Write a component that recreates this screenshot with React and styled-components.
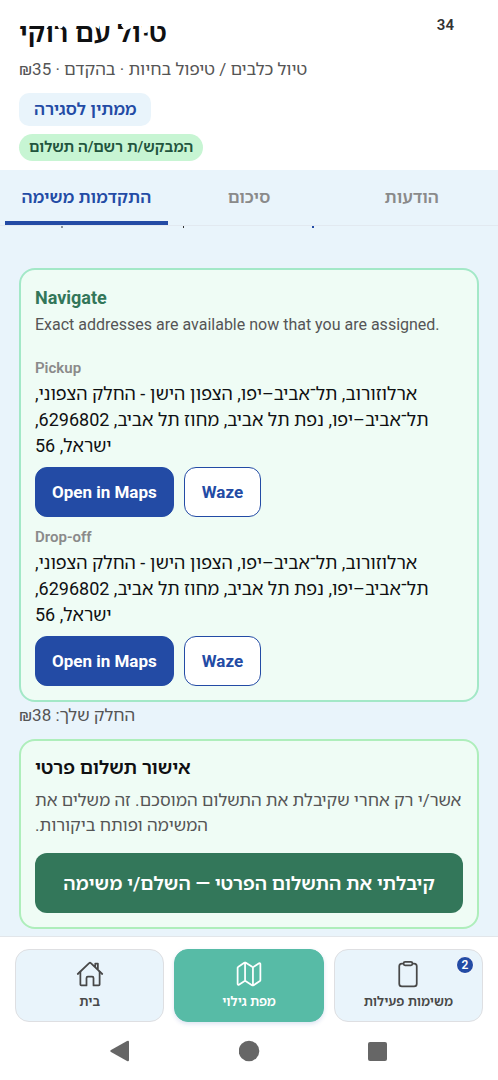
import React from "react";
import styled, { createGlobalStyle, css } from "styled-components";
import { IoHomeOutline, IoMapOutline, IoClipboardOutline } from "react-icons/io5";

const colors = {
  page: "#e9f4fb",
  blue: "#234ba5",
  green: "#33775a",
  teal: "#57bba6",
  mint: "#effcf5",
  text: "#0f1012",
  muted: "#555555",
  faint: "#8a8a8a",
};

const GlobalStyle = createGlobalStyle`
  * {
    box-sizing: border-box;
  }
  body {
    margin: 0;
    background: #fff;
    color: ${colors.text};
    font-family: Roboto, "Noto Sans Hebrew", "Noto Sans", "Open Sans", sans-serif;
  }
  h1, h2, h3, p {
    margin: 0;
  }
  button {
    font-family: inherit;
    cursor: pointer;
  }
`;

const Screen = styled.div`
  min-height: 100vh;
  display: flex;
  flex-direction: column;
`;

const Header = styled.header`
  position: relative;
  display: flex;
  flex-direction: column;
  align-items: flex-start;
  padding: 13px 19px 9px;
  background: #fff;
`;

const Title = styled.h1`
  font-size: 27px;
  line-height: 40px;
  font-weight: 600;
`;

const Subtitle = styled.p`
  margin-top: 3px;
  font-size: 17px;
  line-height: 26px;
  color: ${colors.muted};
`;

const Battery = styled.span`
  position: absolute;
  top: 16px;
  right: 44px;
  font-size: 15px;
  line-height: 18px;
  font-weight: 600;
  color: #333;
`;

const StatusIcons = styled.svg`
  position: absolute;
  top: 14px;
  left: 19px;
`;

const Status = styled.span`
  margin-top: 11px;
  padding: 4px 15px;
  border-radius: 10px;
  background: ${colors.page};
  color: ${colors.blue};
  font-size: 17px;
  line-height: 25px;
  font-weight: 600;
`;

const Payment = styled.span`
  margin-top: 8px;
  padding: 2px 10px;
  border-radius: 14px;
  background: #c7f5d3;
  color: #22543d;
  font-size: 15px;
  line-height: 23px;
  font-weight: 600;
`;

const Tabs = styled.nav`
  display: flex;
  padding: 0 5px;
  background: ${colors.page};
  border-bottom: 1px solid #e2e9f0;
`;

const Tab = styled.button`
  flex: 1;
  height: 55px;
  padding: 2px 0 0;
  border: 0;
  border-bottom: 4px solid ${(props) => (props.$active ? colors.blue : "transparent")};
  background: none;
  color: ${(props) => (props.$active ? colors.blue : colors.faint)};
  font-size: 17px;
  font-weight: 600;
`;

const Content = styled.main`
  flex: 1;
  padding: 0 19px 7px;
  background: ${colors.page};
`;

const ScrolledSteps = styled.svg`
  display: block;
  height: 42px;
`;

const Card = styled.section`
  padding: 14px;
  border: 2px solid ${(props) => (props.$payment ? "#aeeebb" : "#a3e8c7")};
  border-radius: 16px;
  background: ${colors.mint};
`;

const CardTitle = styled.h2`
  font-size: 18px;
  line-height: 27px;
  font-weight: 700;
  color: ${colors.green};
`;

const CardText = styled.p`
  font-size: 16px;
  line-height: 28px;
  color: ${colors.muted};
`;

const Stop = styled.div`
  margin-top: ${(props) => (props.$first ? "17px" : "8px")};
`;

const StopLabel = styled.h3`
  font-size: 15px;
  line-height: 25px;
  font-weight: 600;
  color: ${colors.faint};
`;

const Address = styled.p`
  font-size: 18px;
  line-height: 26px;
  text-align: left;
`;

const Actions = styled.div`
  display: flex;
  gap: 10px;
  margin-top: 8px;
`;

const MapButton = styled.button`
  height: 50px;
  padding: 0 16px;
  border: 1px solid ${colors.blue};
  border-radius: 12px;
  background: ${colors.blue};
  color: #fff;
  font-size: 17px;
  font-weight: 700;
  ${(props) =>
    props.$outline &&
    css`
      padding: 0 17px;
      background: #fff;
      color: ${colors.blue};
    `}
`;

const Share = styled.p`
  padding-bottom: 11px;
  font-size: 17px;
  line-height: 26px;
  color: ${colors.muted};
  text-align: left;
`;

const PaymentTitle = styled.h2`
  font-size: 19px;
  line-height: 26px;
  font-weight: 600;
  text-align: left;
`;

const PaymentText = styled.p`
  margin-top: 7px;
  font-size: 17px;
  line-height: 25px;
  color: ${colors.muted};
  text-align: left;
`;

const ConfirmButton = styled.button`
  width: 100%;
  height: 60px;
  margin-top: 15px;
  border: 0;
  border-radius: 12px;
  background: ${colors.green};
  color: #fff;
  font-size: 19px;
  font-weight: 600;
`;

const BottomNav = styled.nav`
  display: flex;
  gap: 10px;
  padding: 12px 15px;
  border-top: 1px solid #e2e6ea;
  background: #fff;
`;

const NavItem = styled.a`
  position: relative;
  flex: 1;
  height: 73px;
  display: flex;
  flex-direction: column;
  align-items: center;
  gap: 4px;
  padding-top: 10px;
  border: 1px solid #dedfe2;
  border-radius: 14px;
  background: ${colors.page};
  color: #484848;
  font-size: 13px;
  line-height: 20px;
  font-weight: 600;
  text-decoration: none;
  svg {
    width: 28px;
    height: 28px;
  }
  ${(props) =>
    props.$active &&
    css`
      border-color: ${colors.teal};
      background: ${colors.teal};
      color: #fff;
      box-shadow: 0 2px 4px rgba(35, 75, 165, 0.15);
    `}
`;

const Badge = styled.span`
  position: absolute;
  top: 6px;
  right: 8px;
  width: 18px;
  height: 18px;
  border: 1px solid #fff;
  border-radius: 50%;
  background: ${colors.blue};
  color: #fff;
  font-size: 12px;
  line-height: 16px;
  text-align: center;
`;

const SystemBar = styled.div`
  display: flex;
  justify-content: center;
  gap: 108px;
  padding: 6px 0 18px;
  background: #fff;
`;

const SystemButton = styled.button`
  padding: 0;
  border: 0;
  background: none;
  color: #666;
  svg {
    display: block;
  }
`;

const ADDRESS =
  "ארלוזורוב, תל־אביב–יפו, הצפון הישן - החלק הצפוני, תל־אביב–יפו, נפת תל אביב, מחוז תל אביב, 6296802, ישראל, 56";

const stops = ["Pickup", "Drop-off"];

const tabs = ["התקדמות משימה", "סיכום", "הודעות"];

const navItems = [
  { label: "בית", Icon: IoHomeOutline },
  { label: "מפת גילוי", Icon: IoMapOutline, active: true },
  { label: "משימות פעילות", Icon: IoClipboardOutline, badge: 2 },
];

function App() {
  return (
    <Screen>
      <GlobalStyle />
      <Header>
        <Title dir="rtl">טיול עם רוקי</Title>
        {/* white status bar icons, they only show where they cross the title */}
        <StatusIcons width="150" height="24" fill="#fff" aria-hidden="true">
          <rect width="150" height="10" />
          <path d="M25 9h7l-6 8z" />
          <path d="M37 9h9l-3 5-3 1z" />
          <path d="M70 9h10v6z" />
          <path d="M102 11l12-2v4l-8 4z" />
          <circle cx="126" cy="15" r="4" />
          <path d="M143 9h6v6z" />
        </StatusIcons>
        <Battery>34</Battery>
        <Subtitle dir="rtl">טיול כלבים / טיפול בחיות · בהקדם · ₪35</Subtitle>
        <Status dir="rtl">ממתין לסגירה</Status>
        <Payment dir="rtl">המבקש/ת רשם/ה תשלום</Payment>
      </Header>
      <Tabs>
        {tabs.map((tab, index) => (
          <Tab key={tab} dir="rtl" $active={index === 0}>
            {tab}
          </Tab>
        ))}
      </Tabs>
      <Content>
        <ScrolledSteps width="300" height="42" aria-hidden="true">
          <rect x="42" y="0" width="2" height="2" fill="#8a949b" />
          <rect x="164" y="0" width="1" height="2" fill="#333" />
          <rect x="293" y="0" width="2" height="2" fill={colors.blue} />
        </ScrolledSteps>
        <Card>
          <CardTitle>Navigate</CardTitle>
          <CardText>Exact addresses are available now that you are assigned.</CardText>
          {stops.map((stop, index) => (
            <Stop key={stop} $first={index === 0}>
              <StopLabel>{stop}</StopLabel>
              <Address dir="rtl">{ADDRESS}</Address>
              <Actions>
                <MapButton>Open in Maps</MapButton>
                <MapButton $outline>Waze</MapButton>
              </Actions>
            </Stop>
          ))}
        </Card>
        <Share dir="rtl">החלק שלך: ₪38</Share>
        <Card $payment>
          <PaymentTitle dir="rtl">אישור תשלום פרטי</PaymentTitle>
          <PaymentText dir="rtl">
            אשר/י רק אחרי שקיבלת את התשלום המוסכם. זה משלים את המשימה ופותח ביקורות.
          </PaymentText>
          <ConfirmButton dir="rtl">קיבלתי את התשלום הפרטי — השלם/י משימה</ConfirmButton>
        </Card>
      </Content>
      <BottomNav>
        {navItems.map(({ label, Icon, active, badge }) => (
          <NavItem key={label} href="#" $active={active}>
            <Icon />
            <span dir="rtl">{label}</span>
            {badge && <Badge>{badge}</Badge>}
          </NavItem>
        ))}
      </BottomNav>
      <SystemBar>
        <SystemButton aria-label="Back">
          <svg width="21" height="22" viewBox="0 0 21 22" fill="currentColor">
            <path d="M17 1 1 10q-1.500 1 0 2l16 9q2 .8 2-1V2q0-2-2-1z" />
          </svg>
        </SystemButton>
        <SystemButton aria-label="Home">
          <svg width="21" height="22" viewBox="0 0 21 22" fill="currentColor">
            <circle cx="10" cy="11" r="10.300" />
          </svg>
        </SystemButton>
        <SystemButton aria-label="Recents">
          <svg width="21" height="22" viewBox="0 0 21 22" fill="currentColor">
            <rect x="0" y="2" width="19" height="19" rx="2" />
          </svg>
        </SystemButton>
      </SystemBar>
    </Screen>
  );
}

export default App;
